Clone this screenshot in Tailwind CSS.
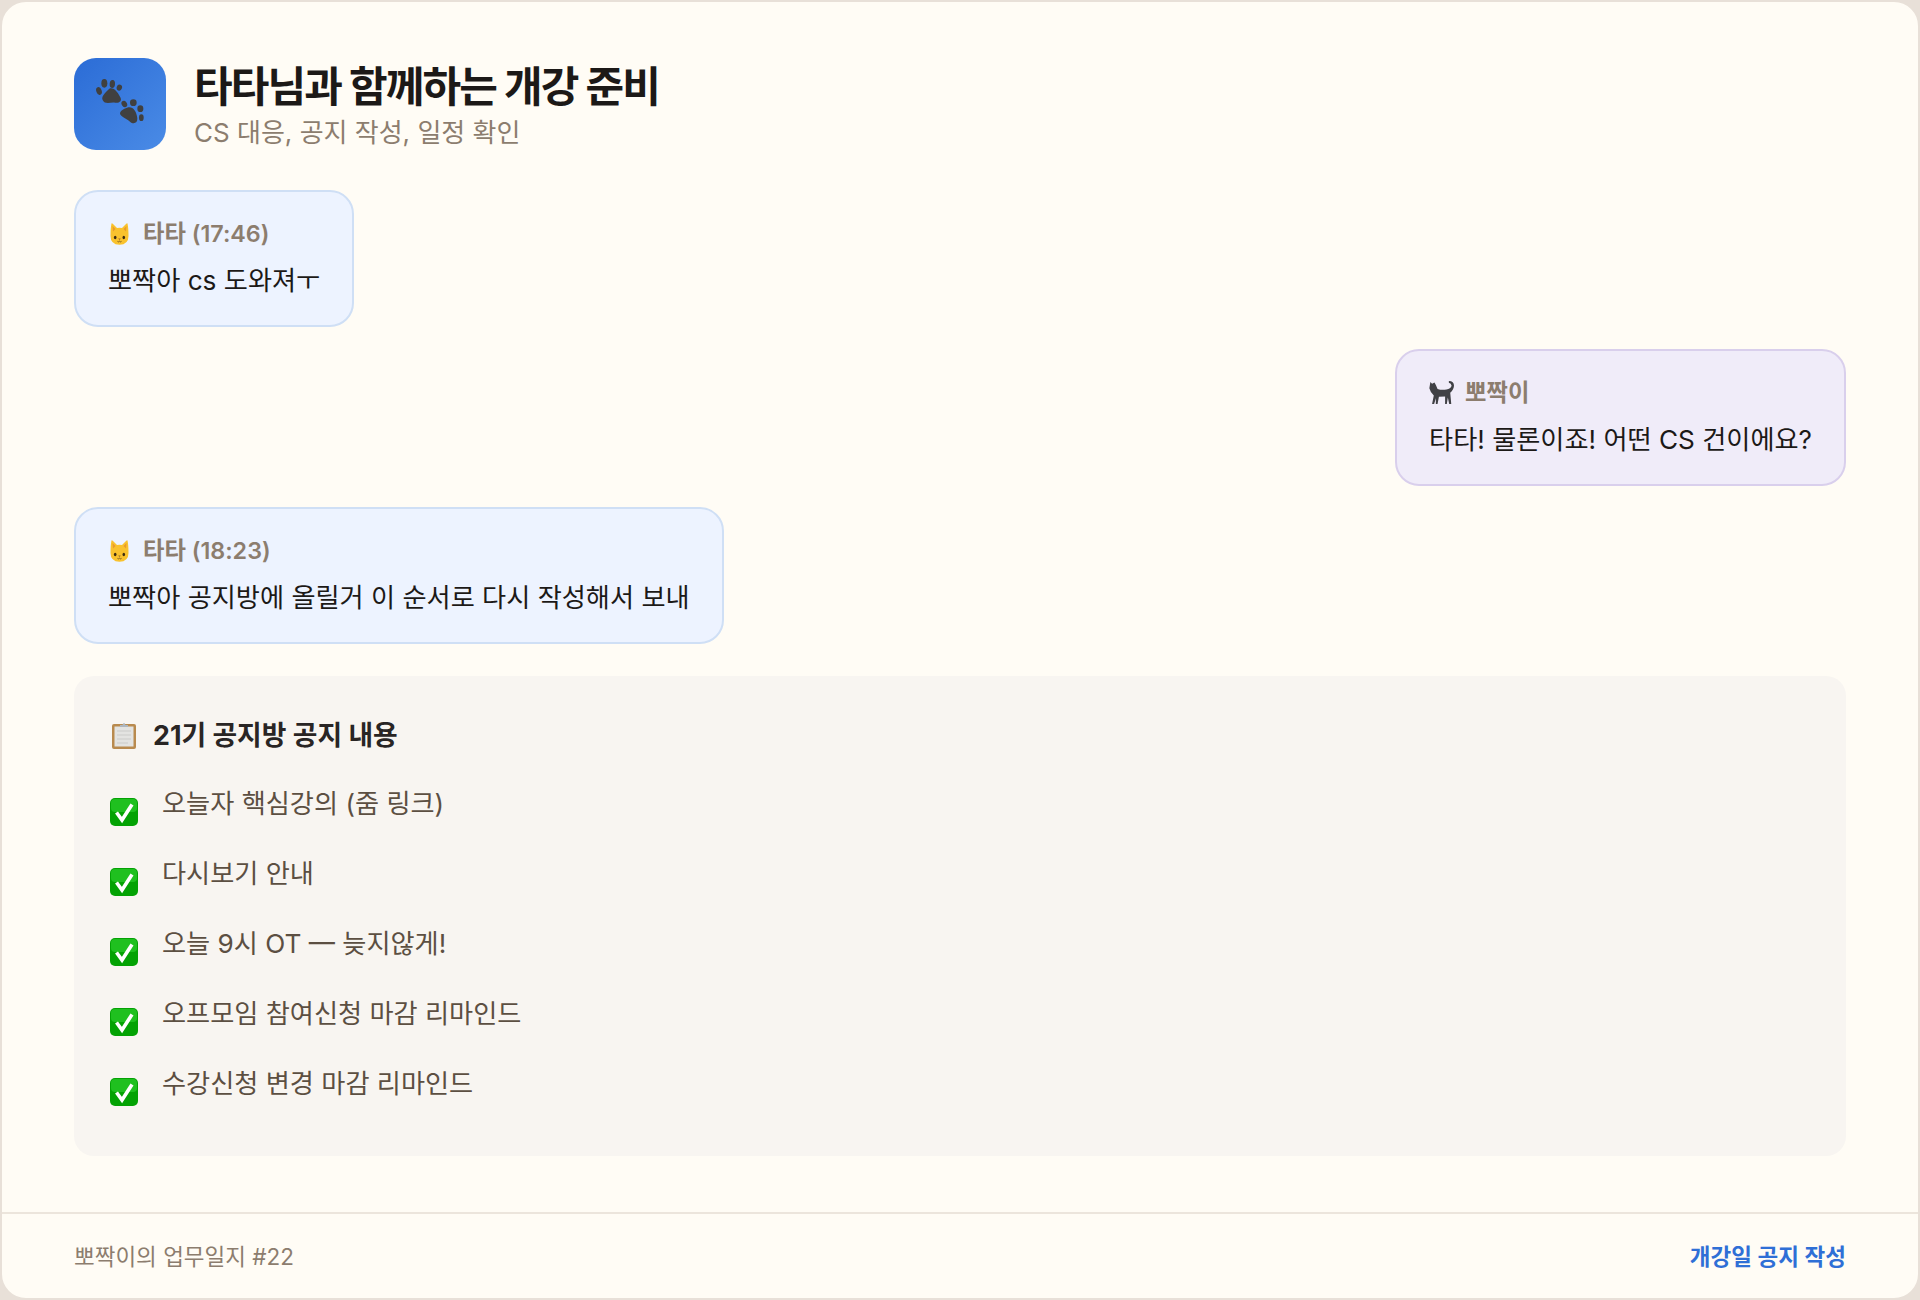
<!DOCTYPE html>
<html lang="ko">
<head>
    <meta charset="UTF-8">
    <title>타타님과 함께하는 개강 준비</title>
    <script src="https://cdn.jsdelivr.net/npm/@tailwindcss/browser@4"></script>
</head>
<body class="bg-[#e8e0d8] font-['Inter','Noto_Sans_CJK_KR',sans-serif] text-[#1c1917]">

    <!-- Icons used more than once -->
    <svg class="hidden">
        <symbol id="check" viewBox="0 0 28 28">
            <rect x="0" y="0" width="28" height="28" rx="5" fill="#04a204"/>
            <rect x="1" y="1" width="26" height="13" rx="4" fill="#1fc01f"/>
            <path d="M6.5 14.5 L12 22 L22 6.5" fill="none" stroke="#fff" stroke-width="3.6"/>
        </symbol>
        <symbol id="cat-face" viewBox="0 0 19 22">
            <path d="M1.5 0.5 Q2 0 3 1 L7 5 Q9.5 4.4 12 5 L16 1 Q17 0 17.5 0.5 Q18.5 5 18.5 13 Q18.5 21.5 9.5 21.8 Q0.5 21.5 0.5 13 Q0.5 5 1.5 0.5Z" fill="#f9c22e"/>
            <path d="M2.5 3 L5.5 6 L3 8.5Z M16.5 3 L13.5 6 L16 8.5Z" fill="#ea9a2c"/>
            <ellipse cx="5.2" cy="14.5" rx="1.3" ry="1.7" fill="#3d2c12"/>
            <ellipse cx="13.8" cy="14.5" rx="1.3" ry="1.7" fill="#3d2c12"/>
            <path d="M8.2 15.5 H10.8 L9.5 17Z" fill="#9a6a2a"/>
            <path d="M7.5 18.4 Q8.7 19.4 9.5 18.2 Q10.3 19.4 11.5 18.4" fill="none" stroke="#5a4020" stroke-width="0.8"/>
        </symbol>
    </svg>

    <div class="w-[1920px] h-[1300px] flex flex-col bg-[#fffcf5] border-2 border-[#e8e0d8] rounded-[26px] overflow-hidden">
        <main class="flex-1 px-[72px] pt-[56px]">
            <!-- Header -->
            <header class="h-[92px] flex items-center gap-[28px]">
                <div class="w-[92px] h-[92px] rounded-[22px] bg-gradient-to-br from-[#2b6cd6] to-[#4a8be6]">
                    <svg class="w-[92px] h-[92px] fill-[#404040]" viewBox="12 24 276 276">
                        <ellipse cx="87" cy="123" rx="8" ry="12" transform="rotate(-20 87 123)"/>
                        <ellipse cx="103" cy="100" rx="9" ry="13"/>
                        <ellipse cx="127" cy="102" rx="8" ry="12" transform="rotate(5 127 102)"/>
                        <ellipse cx="148" cy="113" rx="8" ry="9" transform="rotate(20 148 113)"/>
                        <path d="M118 116 C130 112 140 122 150 140 C158 152 148 160 135 158 C122 156 105 165 98 150 C93 140 105 128 118 116Z"/>
                        <ellipse cx="163" cy="162" rx="8" ry="10" transform="rotate(-30 163 162)"/>
                        <ellipse cx="190" cy="158" rx="10" ry="10"/>
                        <ellipse cx="211" cy="176" rx="9" ry="10"/>
                        <ellipse cx="214" cy="203" rx="7" ry="10"/>
                        <path d="M175 172 C190 170 200 185 202 205 C203 220 190 224 180 215 C170 206 150 200 150 190 C152 180 165 175 175 172Z"/>
                    </svg>
                </div>
                <div class="pt-[3px]">
                    <h1 class="text-[42px] leading-[52px] font-bold tracking-[-1.9px]">타타님과 함께하는 개강 준비</h1>
                    <p class="mt-[2px] text-[26px] leading-[36px] text-[#8c7d6e]">CS 대응, 공지 작성, 일정 확인</p>
                </div>
            </header>

            <!-- Chat -->
            <div class="mt-[40px] flex flex-col gap-[21.5px]">
                <div class="self-start bg-[#edf3ff] border-2 border-[#cfdff5] rounded-[24px] px-[32px] pt-[25px] pb-[25px]">
                    <div class="flex items-center gap-[14px] text-[23.3px] leading-[34px] font-semibold text-[#8c7d6e]">
                        <svg class="w-[19px] h-[22px] ml-[2px]"><use href="#cat-face"/></svg>
                        <span>타타 (17:46)</span>
                    </div>
                    <p class="mt-[11px] text-[26.2px] leading-[38px]">뽀짝아 cs 도와져ㅜ</p>
                </div>

                <div class="self-end bg-[#f0ecf9] border-2 border-[#d9cfec] rounded-[24px] px-[32px] pt-[25px] pb-[25px]">
                    <div class="flex items-center gap-[11px] text-[23.3px] leading-[34px] font-semibold text-[#8c7d6e]">
                        <svg class="w-[25px] h-[24px] fill-[#404045]" viewBox="27 24 73 70">
                            <path d="M31 27 L36 32 L43 28 L47 36 L52 47 Q62 51 78 49 Q90 47 93 38 Q92 31 85 29 L85 24 Q100 24 100 38 Q99 50 89 58 L92 91 L86 91 L82 72 L79 91 L74 91 L74 69 L56 70 L52 91 L47 91 L47 74 L42 91 L36 91 L41 66 Q30 55 28 45 Z"/>
                        </svg>
                        <span>뽀짝이</span>
                    </div>
                    <p class="mt-[11px] text-[26.2px] leading-[38px]">타타! 물론이죠! 어떤 CS 건이에요?</p>
                </div>

                <div class="self-start bg-[#edf3ff] border-2 border-[#cfdff5] rounded-[24px] px-[32px] pt-[25px] pb-[25px]">
                    <div class="flex items-center gap-[14px] text-[23.3px] leading-[34px] font-semibold text-[#8c7d6e]">
                        <svg class="w-[19px] h-[22px] ml-[2px]"><use href="#cat-face"/></svg>
                        <span>타타 (18:23)</span>
                    </div>
                    <p class="mt-[11px] text-[26.2px] leading-[38px]">뽀짝아 공지방에 올릴거 이 순서로 다시 작성해서 보내</p>
                </div>
            </div>

            <!-- Notice panel -->
            <section class="mt-[32px] h-[480px] bg-[#f8f5f1] rounded-[20px] px-[36px] pt-[40px]">
                <div class="flex items-center gap-[17px] pl-[2px]">
                    <svg class="w-[24px] h-[27px]" viewBox="0 0 24 27">
                        <rect x="0" y="2" width="24" height="25" rx="2" fill="#b98a4e"/>
                        <rect x="2.5" y="4.5" width="19" height="20" fill="#e3e3e1"/>
                        <path d="M5 9 H19 M5 13 H19 M5 17 H19 M5 21 H16" stroke="#d3d3d1" stroke-width="1.5"/>
                        <path d="M8 5 L8 3 L10.5 3 Q12 -1 13.5 3 L16 3 L16 5Z" fill="#aeb6be"/>
                    </svg>
                    <h2 class="text-[26.8px] leading-[38px] font-bold text-[#292524]">21기 공지방 공지 내용</h2>
                </div>
                <ul class="mt-[28px] flex flex-col gap-[26px] text-[26.2px] leading-[44px] text-[#5c4f42]">
                    <li class="flex items-start gap-[24px]"><svg class="w-[28px] h-[28px] shrink-0 mt-[16px]"><use href="#check"/></svg><span>오늘자 핵심강의 (줌 링크)</span></li>
                    <li class="flex items-start gap-[24px]"><svg class="w-[28px] h-[28px] shrink-0 mt-[16px]"><use href="#check"/></svg><span>다시보기 안내</span></li>
                    <li class="flex items-start gap-[24px]"><svg class="w-[28px] h-[28px] shrink-0 mt-[16px]"><use href="#check"/></svg><span>오늘 9시 OT — 늦지않게!</span></li>
                    <li class="flex items-start gap-[24px]"><svg class="w-[28px] h-[28px] shrink-0 mt-[16px]"><use href="#check"/></svg><span>오프모임 참여신청 마감 리마인드</span></li>
                    <li class="flex items-start gap-[24px]"><svg class="w-[28px] h-[28px] shrink-0 mt-[16px]"><use href="#check"/></svg><span>수강신청 변경 마감 리마인드</span></li>
                </ul>
            </section>
        </main>

        <!-- Footer -->
        <footer class="h-[86px] shrink-0 border-t-2 border-[#ece5dc] px-[72px] pt-[2px] flex items-center justify-between text-[22.5px]">
            <span class="text-[#8c7d6e]">뽀짝이의 업무일지 #22</span>
            <span class="font-semibold text-[#2f6fd6]">개강일 공지 작성</span>
        </footer>
    </div>

</body>
</html>
